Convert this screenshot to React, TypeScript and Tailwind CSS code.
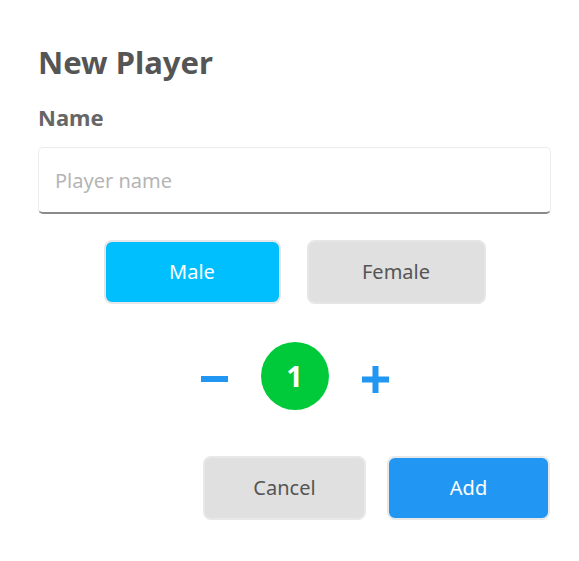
import { useState } from "react";

export default function App() {
  const [gender, setGender] = useState<"male" | "female">("male");
  const [count, setCount] = useState(1);

  return (
    <div className="w-[579px] h-[561px] bg-white pl-[38px] pr-[28px] pt-[40px] font-['Noto_Sans','Open_Sans',sans-serif]">
      <h1 className="text-[31px] font-bold leading-[44px] text-[#555]">New Player</h1>
      <label className="mt-[18px] block text-[22px] font-bold leading-[30px] text-[#666]">Name</label>

      <input
        placeholder="Player name"
        className="mt-[15px] block h-[67px] w-[513px] rounded-[5px] border border-[#ededed] border-b-2 border-b-[#8a8a8a] px-[16px] text-[20px] text-[#444] outline-none placeholder:text-[#b5b5b5]"
      />

      <div className="mt-[26px] flex justify-center gap-[26px]">
        <button
          onClick={() => setGender("male")}
          className={`h-[64px] w-[177px] rounded-[8px] border-2 border-[#e6e6e6] text-[20px] ${
            gender === "male" ? "bg-[#00bfff] text-white" : "bg-[#e0e0e0] text-[#555]"
          }`}
        >
          Male
        </button>
        <button
          onClick={() => setGender("female")}
          className={`h-[64px] w-[179px] rounded-[8px] border-2 border-[#e6e6e6] text-[20px] ${
            gender === "female" ? "bg-[#00bfff] text-white" : "bg-[#e0e0e0] text-[#555]"
          }`}
        >
          Female
        </button>
      </div>

      <div className="mt-[38px] flex items-center justify-center gap-[33px]">
        <button onClick={() => setCount(Math.max(1, count - 1))} className="mt-[6px] flex h-[27px] w-[27px] items-center justify-center">
          <svg width="27" height="6" viewBox="0 0 27 6"><rect x="0" y="0" width="27" height="6" fill="#2196f3" /></svg>
        </button>
        <div className="flex h-[68px] w-[68px] items-center justify-center rounded-full bg-[#00c93a] text-[29px] font-bold text-white">
          {count}
        </div>
        <button onClick={() => setCount(count + 1)} className="mt-[6px] flex h-[27px] w-[27px] items-center justify-center">
          <svg width="27" height="27" viewBox="0 0 27 27">
            <rect x="0" y="10.5" width="27" height="6" fill="#2196f3" />
            <rect x="10.5" y="0" width="6" height="27" fill="#2196f3" />
          </svg>
        </button>
      </div>

      <div className="mt-[46px] flex justify-end gap-[21px] pr-[1px]">
        <button className="h-[64px] w-[163px] rounded-[8px] border-2 border-[#e8e8e8] bg-[#e0e0e0] text-[20px] text-[#555]">Cancel</button>
        <button className="h-[64px] w-[163px] rounded-[8px] border-2 border-[#e8e8e8] bg-[#2196f3] text-[20px] text-white">Add</button>
      </div>
    </div>
  );
}
